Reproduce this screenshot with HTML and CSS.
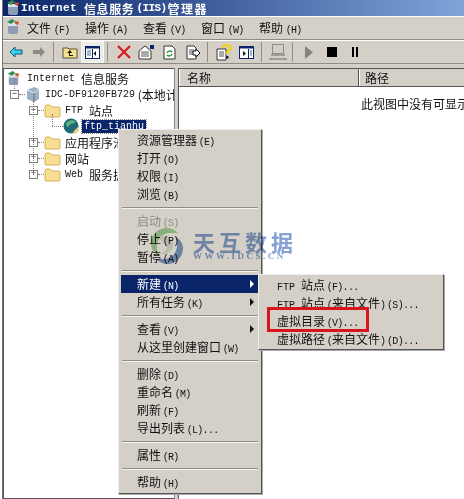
FILE: index.html
```html
<!DOCTYPE html>
<html lang="zh-CN">
<head>
  <meta charset="UTF-8">
  <title>Internet 信息服务 (IIS)管理器</title>
  <link rel="stylesheet" href="styles.css">
</head>
<body>
  <div class="window">
    <div class="titlebar">
      <svg class="appIcon" width="16" height="16" viewBox="0 0 16 16"><rect x="3" y="4" width="10" height="11" rx="2" fill="#8c9cb4"/><rect x="3" y="4" width="10" height="3" fill="#dde3ec"/><path d="M2 3l5-3 3 2-4 3z" fill="#2f8f4e"/><path d="M10 2l4 1-1 3-3-1z" fill="#c7532c"/></svg>
      <span class="titleEn">Internet</span><span class="titleZh">信息服务</span><span class="titleEn titleIis">(IIS)</span><span class="titleZh titleEnd">管理器</span>
    </div>

    <div class="menubar">
      <svg class="appIcon" width="16" height="16" viewBox="0 0 16 16"><rect x="3" y="4" width="10" height="11" rx="2" fill="#8c9cb4"/><rect x="3" y="4" width="10" height="3" fill="#dde3ec"/><path d="M2 3l5-3 3 2-4 3z" fill="#2f8f4e"/><path d="M10 2l4 1-1 3-3-1z" fill="#c7532c"/></svg>
      <span class="menuTop">文件 <span class="key">(F)</span></span>
      <span class="menuTop">操作 <span class="key">(A)</span></span>
      <span class="menuTop">查看 <span class="key">(V)</span></span>
      <span class="menuTop">窗口 <span class="key">(W)</span></span>
      <span class="menuTop">帮助 <span class="key">(H)</span></span>
    </div>

    <div class="toolbar">
      <span class="tool"><svg width="14" height="12" viewBox="0 0 14 12"><path d="M1 6l5-5v3h7v4H6v3z" fill="#3fd0f0" stroke="#0b5a78"/></svg></span>
      <span class="tool"><svg width="14" height="12" viewBox="0 0 14 12"><path d="M13 6L8 1v3H1v4h7v3z" fill="#8a8a86"/></svg></span>
      <span class="sep"></span>
      <span class="tool"><svg width="16" height="14" viewBox="0 0 16 14"><path d="M1 3h5l1 1h8v9H1z" fill="#f4e28c" stroke="#5a5030"/><path d="M8 5l-3 3h2v3h4v-1H8V8h2z" fill="#111"/></svg></span>
      <span class="tool pressed"><svg width="15" height="13" viewBox="0 0 15 13"><rect x=".5" y=".5" width="14" height="12" fill="#fff" stroke="#0a246a"/><rect x=".5" y=".5" width="14" height="2" fill="#0a246a"/><path d="M7.500 3v9" stroke="#0a246a"/><path d="M11 5v5L8.500 7.500z" fill="#111"/><path d="M2 5h4M2 7h4M2 9h4" stroke="#5a6a90"/></svg></span>
      <span class="sep"></span>
      <span class="tool"><svg width="14" height="14" viewBox="0 0 14 14"><path d="M1 1l12 12M13 1L1 13" stroke="#d8201c" stroke-width="2.400"/></svg></span>
      <span class="tool"><svg width="17" height="16" viewBox="0 0 17 16"><path d="M1 7l6-5 6 5v8H1z" fill="#fff" stroke="#333"/><path d="M3 8h8M3 10h8M3 12h8" stroke="#555"/><rect x="12" y="1" width="4" height="4" fill="#0a246a"/></svg></span>
      <span class="tool"><svg width="13" height="15" viewBox="0 0 13 15"><path d="M1 1h8l3 3v10H1z" fill="#fff" stroke="#333"/><path d="M4 8a3 3 0 0 1 5-1M9 9a3 3 0 0 1-5 1" fill="none" stroke="#1f9a3c" stroke-width="1.400"/></svg></span>
      <span class="tool"><svg width="14" height="15" viewBox="0 0 14 15"><path d="M1 1h7l2 2v11H1z" fill="#fff" stroke="#333"/><path d="M3 5h5M3 7h5M3 9h5" stroke="#555"/><path d="M7 6h3V4l4 4-4 4v-2H7z" fill="#fff" stroke="#111"/></svg></span>
      <span class="sep"></span>
      <span class="tool"><svg width="16" height="17" viewBox="0 0 16 17"><path d="M1 5h9v11H1z" fill="#fff" stroke="#333"/><path d="M3 8h5M3 10h5M3 12h5" stroke="#555"/><path d="M7 4a4 3 0 1 1 5 3l-1 2v1" fill="none" stroke="#f2d21c" stroke-width="2.400"/><rect x="10" y="12" width="2.500" height="2.500" fill="#222"/></svg></span>
      <span class="tool"><svg width="15" height="13" viewBox="0 0 15 13"><rect x=".5" y=".5" width="14" height="12" fill="#fff" stroke="#0a246a"/><rect x=".5" y=".5" width="14" height="2" fill="#0a246a"/><path d="M9.500 3v9" stroke="#0a246a"/><path d="M4 5v5l3-2.500z" fill="#111"/><path d="M11 5h2M11 7h2M11 9h2" stroke="#5a6a90"/></svg></span>
      <span class="sep"></span>
      <span class="tool"><svg width="18" height="16" viewBox="0 0 18 16"><rect x="3.500" y=".5" width="11" height="9" fill="none" stroke="#8e8c84"/><path d="M2 11h14M0 15h18M8 10v1" stroke="#8e8c84" stroke-width="1.500"/></svg></span>
      <span class="sep"></span>
      <span class="tool"><svg width="8" height="13" viewBox="0 0 8 13"><path d="M0 0l8 6.500L0 13z" fill="#85837c"/></svg></span>
      <span class="tool"><svg width="10" height="10" viewBox="0 0 10 10"><rect width="10" height="10" fill="#000"/></svg></span>
      <span class="tool"><svg width="6" height="10" viewBox="0 0 6 10"><path d="M0 0h2v10H0zM4 0h2v10H4z" fill="#000"/></svg></span>
    </div>

    <div class="panes">
      <div class="tree">
        <span class="guide guideRoot"></span>
        <span class="guide guideSites"></span>
        <div class="row"><svg class="treeIcon rootIcon" width="15" height="15" viewBox="0 0 16 16"><rect x="3" y="4" width="10" height="11" rx="2" fill="#8c9cb4"/><rect x="3" y="4" width="10" height="3" fill="#dde3ec"/><path d="M2 3l5-3 3 2-4 3z" fill="#2f8f4e"/><path d="M10 2l4 1-1 3-3-1z" fill="#c7532c"/></svg><span class="en lbl">Internet</span>信息服务</div>
        <div class="row lv1"><span class="box">−</span><span class="dots"></span><svg class="treeIcon" width="16" height="15" viewBox="0 0 16 15"><path d="M2 3l7-3 5 2v10l-5 3-7-3z" fill="#9cb0c6"/><path d="M2 3l7 3 5-4" fill="none" stroke="#e6ecf2"/><path d="M9 6v9" stroke="#5e7086"/></svg><span class="en">IDC-DF9120FB729</span>&nbsp;(本地计算机)</div>
        <div class="row lv2"><span class="box">−</span><span class="dots"></span><svg class="folder" width="17" height="15" viewBox="0 0 17 15"><path d="M1 4q0-2 2-2h3l2 2h7q1 0 1 1v8q0 1-1 1H2q-1 0-1-1z" fill="#f8dd94" stroke="#d8b05c"/></svg><span class="en lbl">FTP</span>站点</div>
        <div class="row lv3"><span class="dotsLong"></span><svg class="treeIcon" width="17" height="16" viewBox="0 0 17 16"><circle cx="8" cy="8" r="7.500" fill="#1d6a78"/><path d="M3 5c3-3 7-4 10-1-2 2-6 1-7 4-1 2-3 1-3-3z" fill="#62b07c"/><path d="M10 14l5-5 1 4-4 3z" fill="#f0d080"/></svg><span class="en selected">ftp_tianhu</span></div>
        <div class="row lv2"><span class="box">+</span><span class="dots"></span><svg class="folder" width="17" height="15" viewBox="0 0 17 15"><path d="M1 4q0-2 2-2h3l2 2h7q1 0 1 1v8q0 1-1 1H2q-1 0-1-1z" fill="#f8dd94" stroke="#d8b05c"/></svg>应用程序池</div>
        <div class="row lv2"><span class="box">+</span><span class="dots"></span><svg class="folder" width="17" height="15" viewBox="0 0 17 15"><path d="M1 4q0-2 2-2h3l2 2h7q1 0 1 1v8q0 1-1 1H2q-1 0-1-1z" fill="#f8dd94" stroke="#d8b05c"/></svg>网站</div>
        <div class="row lv2"><span class="box">+</span><span class="dots"></span><svg class="folder" width="17" height="15" viewBox="0 0 17 15"><path d="M1 4q0-2 2-2h3l2 2h7q1 0 1 1v8q0 1-1 1H2q-1 0-1-1z" fill="#f8dd94" stroke="#d8b05c"/></svg><span class="en lbl">Web</span>服务扩展</div>
      </div>

      <div class="list">
        <div class="listHead">
          <span class="colName">名称</span>
          <span class="colPath">路径</span>
        </div>
        <div class="emptyMsg">此视图中没有可显示的项目。</div>
      </div>
    </div>
  </div>

  <!-- context menu -->
  <div class="ctxMenu">
    <div class="item">资源管理器 <span class="key">(E)</span></div>
    <div class="item">打开 <span class="key">(O)</span></div>
    <div class="item">权限 <span class="key">(I)</span></div>
    <div class="item">浏览 <span class="key">(B)</span></div>
    <div class="line"></div>
    <div class="item off">启动 <span class="key">(S)</span></div>
    <div class="item">停止 <span class="key">(P)</span></div>
    <div class="item">暂停 <span class="key">(A)</span></div>
    <div class="line"></div>
    <div class="item active arrow">新建 <span class="key">(N)</span></div>
    <div class="item arrow">所有任务 <span class="key">(K)</span></div>
    <div class="line"></div>
    <div class="item arrow">查看 <span class="key">(V)</span></div>
    <div class="item">从这里创建窗口 <span class="key">(W)</span></div>
    <div class="line"></div>
    <div class="item">删除 <span class="key">(D)</span></div>
    <div class="item">重命名 <span class="key">(M)</span></div>
    <div class="item">刷新 <span class="key">(F)</span></div>
    <div class="item">导出列表 <span class="key">(L)...</span></div>
    <div class="line"></div>
    <div class="item">属性 <span class="key">(R)</span></div>
    <div class="line"></div>
    <div class="item">帮助 <span class="key">(H)</span></div>
  </div>

  <div class="subMenu">
    <div class="item"><span class="en lbl">FTP</span>站点 <span class="key">(F)...</span></div>
    <div class="item"><span class="en lbl">FTP</span>站点 <span class="key">(</span>来自文件<span class="key">)</span> <span class="key">(S)...</span></div>
    <div class="item">虚拟目录 <span class="key">(V)...</span></div>
    <div class="item">虚拟路径 <span class="key">(</span>来自文件<span class="key">)</span> <span class="key">(D)...</span></div>
  </div>
  <div class="redBox"></div>

  <!-- watermark -->
  <div class="mark">
    <svg width="38" height="42" viewBox="0 0 38 42"><path d="M30 8C20-2 4 4 3 18c0 6 3 10 8 12C6 22 10 8 22 8c3 0 6 0 8 0z" fill="#a6d8a0"/><path d="M8 34c10 10 26 4 27-10 0-6-3-10-8-12 5 8 1 22-11 22-3 0-6 0-8 0z" fill="#7f9fd0"/><path d="M11 12c8-3 16 2 14 10-1 5-8 7-14 9 9-6 9-9 5-12-2-2-4-4-5-7z" fill="#dfe6dc"/></svg>
    <div class="markText">
      <div class="markName">天互数据</div>
      <div class="markUrl">WWW.IDCS.CN</div>
    </div>
  </div>
</body>
</html>
```

FILE: styles.css
```css
html, body {
  margin: 0;
  width: 464px;
  height: 499px;
  overflow: hidden;
  background: #fff;
}
body {
  position: relative;
  font: 12px "Noto Sans CJK SC", "Liberation Sans", sans-serif;
  color: #111;
}
.en {
  font-family: "Liberation Mono", monospace;
  font-size: 10px;
}
.lbl {
  margin-right: 6px;
}
.key {
  font-family: "Liberation Mono", monospace;
  font-size: 10px;
  letter-spacing: -.7px;
}
.window {
  margin-left: 2px;
  height: 499px;
  background: #d4d0c8;
  display: flex;
  flex-direction: column;
  border-left: 1px solid #777;
}
.titlebar {
  height: 16px;
  padding-left: 2px;
  display: flex;
  align-items: center;
  white-space: nowrap;
  color: #fff;
  font-weight: bold;
  background: linear-gradient(to right, #0a246a, #7ea4d8);
}
.titleEn {
  font: bold 11px "Liberation Mono", monospace;
  letter-spacing: .4px;
}
.titleIis {
  letter-spacing: -.6px;
}
.titleZh {
  margin: 0 2px 0 7px;
  letter-spacing: .6px;
}
.titleEnd {
  margin-left: 1px;
  letter-spacing: 1.500px;
}
.menubar {
  height: 24px;
  box-sizing: border-box;
  display: flex;
  align-items: center;
  padding: 0 0 2px 2px;
  border-top: 1px solid #fff;
  border-bottom: 1px solid #8e8c84;
}
.menubar .appIcon {
  margin-right: 6px;
}
.menuTop {
  width: 58px;
  flex: none;
  white-space: nowrap;
}
.toolbar {
  height: 24px;
  box-sizing: border-box;
  display: flex;
  align-items: center;
  padding-left: 1px;
  border-top: 1px solid #fff;
  border-bottom: 1px solid #8e8c84;
}
.tool {
  width: 23px;
  height: 22px;
  flex: none;
  display: flex;
  align-items: center;
  justify-content: center;
}
.pressed {
  background: #eeece6;
  outline: 1px solid #f8f8f8;
  outline-offset: -1px;
}
.sep {
  width: 8px;
  flex: none;
  height: 20px;
  box-sizing: border-box;
  border-left: 1px solid #8e8c84;
  transform: translateX(3px);
}
.panes {
  flex: 1;
  display: flex;
  gap: 3px;
  padding-top: 4px;
  min-height: 0;
}
.tree {
  position: relative;
  width: 172px;
  flex: none;
  box-sizing: border-box;
  background: #fff;
  border: 1px solid #555;
  border-right-color: #8e8c84;
  padding-top: 1px;
  overflow: hidden;
  white-space: nowrap;
}
.row {
  height: 16px;
  display: flex;
  align-items: center;
  padding-left: 2px;
}
.treeIcon, .folder {
  flex: none;
  margin-right: 4px;
}
.rootIcon {
  margin-right: 6px;
}
.lv1 {
  padding-left: 6px;
}
.lv2 {
  padding-left: 25px;
}
.lv3 {
  padding-left: 48px;
}
.box {
  width: 9px;
  height: 9px;
  flex: none;
  box-sizing: border-box;
  border: 1px solid #808080;
  background: #fff;
  font: 9px/7px "Liberation Mono", monospace;
  text-align: center;
}
.dots {
  width: 6px;
  flex: none;
  border-top: 1px dotted #808080;
}
.dotsLong {
  width: 11px;
  flex: none;
  border-top: 1px dotted #808080;
}
.selected {
  background: #0a246a;
  color: #fff;
  padding: 1px 2px;
  margin-left: -2px;
  outline: 1px dotted #888;
}
.guide {
  position: absolute;
  border-left: 1px dotted #808080;
}
.guideRoot {
  left: 10px;
  top: 10px;
  height: 10px;
}
.guideSites {
  left: 29px;
  top: 28px;
  height: 78px;
}
.guideSites::after {
  content: "";
  position: absolute;
  left: 18px;
  top: 17px;
  height: 12px;
  border-left: 1px dotted #808080;
}
.list {
  flex: 1;
  min-width: 0;
  background: #fff;
  overflow: hidden;
  white-space: nowrap;
  border-left: 1px solid #555;
  border-top: 1px solid #555;
}
.listHead {
  height: 17px;
  display: flex;
  background: #d4d0c8;
  border-bottom: 1px solid #555;
}
.colName {
  width: 180px;
  flex: none;
  padding-left: 7px;
  box-sizing: border-box;
  border-left: 1px solid #fff;
  border-right: 1px solid #555;
}
.colPath {
  flex: 1;
  padding-left: 5px;
  border-left: 1px solid #fff;
}
.emptyMsg {
  margin: 8px 0 0 182px;
}
.ctxMenu, .subMenu {
  position: absolute;
  box-sizing: border-box;
  background: #d4d0c8;
  border: 1px solid;
  border-color: #eee #555 #555 #eee;
  box-shadow: 1px 1px 0 #aaa;
  white-space: nowrap;
}
.ctxMenu {
  left: 118px;
  top: 129px;
  width: 144px;
  padding: 1px 2px 2px;
}
.subMenu {
  left: 258px;
  top: 274px;
  width: 186px;
  padding: 1px 2px;
}
.item {
  position: relative;
  height: 18px;
  line-height: 18px;
  padding-left: 16px;
  word-spacing: -1px;
}
.off {
  color: #8e8c84;
}
.active {
  background: #0a246a;
  color: #fff;
}
.arrow::after {
  content: "";
  position: absolute;
  right: 5px;
  top: 5px;
  border-left: 4px solid currentColor;
  border-top: 4px solid transparent;
  border-bottom: 4px solid transparent;
}
.line {
  height: 0;
  margin: 4px 1px 3px;
  border-top: 1px solid #8e8c84;
  border-bottom: 1px solid #f4f4f0;
}
.redBox {
  position: absolute;
  left: 267px;
  top: 307px;
  width: 96px;
  height: 19px;
  border: 3px solid #d8141c;
}
.mark {
  position: absolute;
  left: 148px;
  top: 225px;
  display: flex;
  gap: 7px;
  mix-blend-mode: multiply;
  pointer-events: none;
}
.markText {
  padding-top: 6px;
  color: #86a2d2;
}
.markName {
  font-size: 22px;
  line-height: 21px;
  font-weight: bold;
  letter-spacing: 4px;
  white-space: nowrap;
}
.markUrl {
  font: bold 9px/9px "Liberation Serif", serif;
  letter-spacing: 2.500px;
  white-space: nowrap;
}
```
